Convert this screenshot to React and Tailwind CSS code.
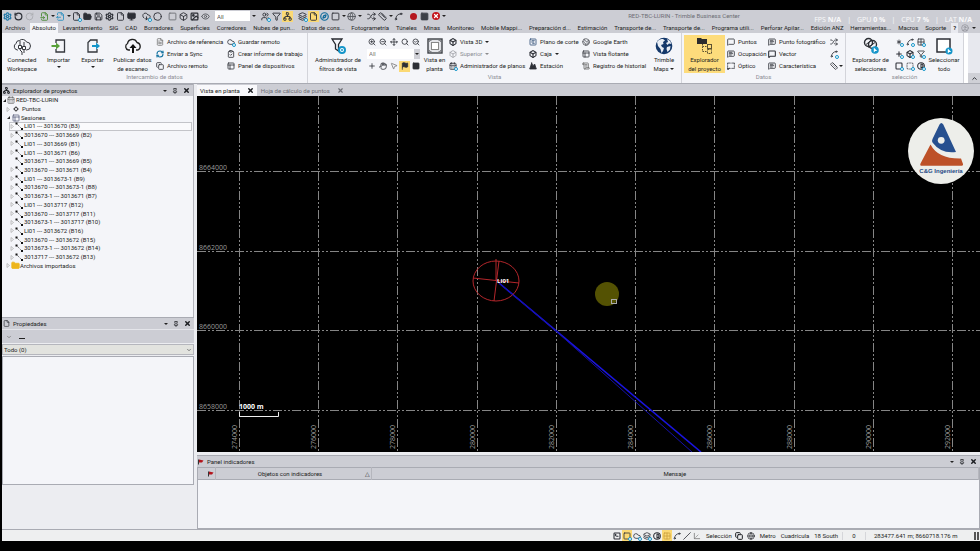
import React, { useState } from "react";
import clsx from "clsx";
import {
  RotateCcw,
  RotateCw,
  FileInput,
  FileOutput,
  FileText,
  File,
  FolderOpen,
  Folder,
  Save,
  Settings,
  Monitor,
  CloudDownload,
  Circle,
  Square,
  Box,
  Image,
  Eye,
  Users,
  Filter,
  Network,
  Layers,
  Compass,
  Globe,
  Shuffle,
  Ruler,
  Spline,
  Cloud,
  RefreshCw,
  Copy,
  ClipboardCheck,
  PanelsTopLeft,
  ZoomIn,
  ZoomOut,
  Search,
  SearchCheck,
  Move,
  Hand,
  MousePointer2,
  Flag,
  CalendarDays,
  SquareChartGantt,
  Mountain,
  Earth,
  ScrollText,
  MessageSquare,
  MessageSquareText,
  MessageSquareDashed,
  Plus,
  Asterisk,
  Grid2x2,
  BoxSelect,
  Contrast,
  CircleUser,
  Pin,
  X,
  ChevronUp,
  ChevronDown,
  SquareTerminal,
  Slash,
  Axis3d,
} from "lucide-react";

const TABS = [
  "Archivo",
  "Absoluto",
  "Levantamiento",
  "SIG",
  "CAD",
  "Borradores",
  "Superficies",
  "Corredores",
  "Nubes de pun...",
  "Datos de cons...",
  "Fotogrametría",
  "Túneles",
  "Minas",
  "Monitoreo",
  "Mobile Mappi...",
  "Preparación d...",
  "Estimación",
  "Transporte de...",
  "Transporte de...",
  "Programa utili...",
  "Perforar Apilar...",
  "Edición ANZ",
  "Herramientas...",
  "Macros",
  "Soporte",
];

const SESSIONS = [
  "LI01 --- 3013670 (B3)",
  "3013670 --- 3013669 (B2)",
  "LI01 --- 3013669 (B1)",
  "LI01 --- 3013671 (B6)",
  "3013671 --- 3013669 (B5)",
  "3013670 --- 3013671 (B4)",
  "LI01 --- 3013673-1 (B9)",
  "3013670 --- 3013673-1 (B8)",
  "3013673-1 --- 3013671 (B7)",
  "LI01 --- 3013717 (B12)",
  "3013670 --- 3013717 (B11)",
  "3013673-1 --- 3013717 (B10)",
  "LI01 --- 3013672 (B16)",
  "3013670 --- 3013672 (B15)",
  "3013673-1 --- 3013672 (B14)",
  "3013717 --- 3013672 (B13)",
];

// "caret" entries are the little split-button arrows
const QUICK_LEFT = [
  [
    { icon: Settings, label: "Trimble", color: "text-[#1d77a8]", bold: true },
    { icon: RotateCcw, label: "Deshacer", bold: true },
    { icon: RotateCw, label: "Rehacer", color: "text-[#a9abb0]" },
  ],
  [
    { icon: FileInput, label: "Importar", color: "text-[#4c8a35]" },
    "caret",
    { icon: FileOutput, label: "Exportar", color: "text-[#2a8fc0]" },
    "caret",
    { icon: File, label: "Nuevo", badge: true },
    { icon: FolderOpen, label: "Abrir", solid: true },
    { icon: Save, label: "Guardar" },
    { icon: Settings, label: "Configuración", bold: true },
    { icon: File, label: "Plantilla" },
    { icon: Monitor, label: "Dispositivo", solid: true },
  ],
  [
    { icon: CloudDownload, label: "Descargar", badge: true },
    { icon: Circle, label: "Sincronizar" },
  ],
  [
    { icon: Square, label: "Planta", color: "text-[#6d7076]" },
    { icon: Box, label: "Vista 3D" },
    { icon: Image, label: "Perfil", bold: true },
    { icon: Eye, label: "Órbita", color: "text-[#55585e]" },
  ],
];

const QUICK_RIGHT = [
  [
    { icon: Users, label: "Selecciones", badge: true },
    { icon: Filter, label: "Filtro" },
    { icon: Network, label: "Explorador", active: true },
  ],
  [
    { icon: Layers, label: "Capas", badge: true },
    { icon: File, label: "Propiedades", active: true },
    { icon: Compass, label: "Brújula", color: "text-[#0f6b9c]", bold: true },
    { icon: Square, label: "Hoja" },
    "caret",
    { icon: Globe, label: "Coordenadas", color: "text-[#55585e]" },
    "caret",
  ],
  [
    { icon: Shuffle, label: "Ajustar" },
    { icon: Ruler, label: "Medir" },
    "caret",
    { icon: Spline, label: "Línea" },
  ],
  [
    { icon: Circle, label: "Grabar", color: "text-[#c4151c]", dot: true },
    { icon: Square, label: "Detener", color: "text-[#3c4047]", solid: true },
    { icon: X, label: "Cancelar", round: true },
    "caret",
  ],
];

const Caret = ({ className }) => (
  <span
    className={clsx(
      "block h-0 w-0 border-x-2 border-t-2 border-x-transparent border-t-[#222]",
      className
    )}
  />
);

const Glyph = ({ item, className }) => {
  const Icon = item.icon;
  return (
    <span className={clsx("relative block shrink-0", className || "size-2")}>
      <Icon
        className={clsx("size-full", item.color || "text-[#2c2f36]")}
        strokeWidth={item.bold ? 3.2 : 2.4}
        fill={item.solid ? "currentColor" : "none"}
      />
      {item.badge && (
        <span className="absolute -right-px -bottom-px size-1 rounded-full border border-[#1595c9] bg-white" />
      )}
    </span>
  );
};

const QuickGroup = ({ items }) => (
  <div className="flex items-center">
    {items.map((item, i) =>
      item === "caret" ? (
        <span key={i} className="flex w-[5px] justify-center">
          <Caret />
        </span>
      ) : (
        <button
          key={i}
          aria-label={item.label}
          className={clsx(
            "flex h-[11px] w-[11px] items-center justify-center",
            item.active && "bg-[#fbd974]"
          )}
        >
          {item.round && (
            <span className="flex size-2 items-center justify-center rounded-full bg-[#c4151c] text-white">
              <X className="size-[6px]" strokeWidth={5} />
            </span>
          )}
          {item.dot && <span className="size-[7px] rounded-full bg-[#b5161d]" />}
          {!item.round && !item.dot && <Glyph item={item} className="size-[9px]" />}
        </button>
      )
    )}
  </div>
);

const TitleBar = () => (
  <div className="flex h-3 items-center">
    <div className="flex h-full items-center gap-1">
      {QUICK_LEFT.map((g, i) => (
        <QuickGroup key={i} items={g} />
      ))}
      <div className="flex items-center">
        <input
          aria-label="Filtro rápido"
          defaultValue="All"
          className="h-[10px] w-[35px] bg-white px-[2px] text-[6px] text-[#555]"
        />
        <Caret className="ml-[2px]" />
      </div>
      {QUICK_RIGHT.map((g, i) => (
        <QuickGroup key={i} items={g} />
      ))}
    </div>
    <h1 className="flex-1 pr-[58px] text-center text-[#6c6e75]">
      RED-TBC-LURIN - Trimble Business Center
    </h1>
  </div>
);

const Stat = ({ name, value }) => (
  <span>
    {name} <b>{value}</b>
  </span>
);

// Performance counter that floats over the title bar
const PerfOverlay = () => (
  <div className="absolute top-[16px] right-2 flex gap-[6px] font-['Open_Sans',sans-serif] text-[7px] leading-[7px] text-white/90">
    <Stat name="FPS" value="N/A" />
    <span>|</span>
    <Stat name="GPU" value="0 %" />
    <span>|</span>
    <Stat name="CPU" value="7 %" />
    <span>|</span>
    <Stat name="LAT" value="N/A" />
  </div>
);

const RibbonTabs = ({ active, onSelect }) => (
  <nav className="flex h-[11px] items-end justify-between pr-1 pl-px">
    {TABS.map((tab, i) => (
      <button
        key={i}
        onClick={() => onSelect(i)}
        className={clsx(
          "h-[10px] px-[2px] whitespace-nowrap",
          i === active ? "bg-[#f4f5f9]" : "hover:bg-white/50"
        )}
      >
        {tab}
      </button>
    ))}
    <button aria-label="Ayuda" className="h-[10px] bg-[#e9eaf0] px-[2px] font-bold">
      ?
    </button>
    <button aria-label="Usuario" className="h-[10px] text-[#8b8d94]">
      <CircleUser className="size-2" />
    </button>
    <Caret className="mb-1" />
  </nav>
);

/* ---- large ribbon drawings ---- */

const ConnectedIcon = () => (
  <svg viewBox="0 0 18 18" className="size-[18px]" fill="none" stroke="#34373d">
    <path d="M5 13H4.500A3.500 3.500 0 0 1 3 6.500 A3.500 3.500 0 0 1 6.500 3.500 A4.500 4.500 0 0 1 13.500 5 A4 4 0 0 1 13.500 13 H13" />
    <path d="M7 8v5l2 2v3M11 5v5M11 13v3M7 4v4" />
    <path d="M5.500 8.500h3v3h-3zM9.500 9.500h3v3h-3z" fill="#fff" />
  </svg>
);

const ImportIcon = () => (
  <svg viewBox="0 0 18 18" className="size-[18px]" fill="none">
    <path d="M6 6V3H14.500V15H6V12" stroke="#34373d" strokeWidth="1.300" />
    <path d="M1.500 9H7" stroke="#58a13a" strokeWidth="2" />
    <path d="M6 5.500L10 9L6 12.500Z" fill="#58a13a" />
  </svg>
);

const ExportIcon = () => (
  <svg viewBox="0 0 18 18" className="size-[18px]" fill="none">
    <path d="M13 12V15H4V5.500L6.500 3H13V6" stroke="#34373d" strokeWidth="1.300" />
    <path d="M8 9H13" stroke="#1595c9" strokeWidth="2" />
    <path d="M12 5.500L16 9L12 12.500Z" fill="#1595c9" />
  </svg>
);

const PublishIcon = () => (
  <svg viewBox="0 0 18 18" className="size-[18px]" fill="none">
    <path
      d="M6 13H4.500A3.500 3.500 0 0 1 3.500 6.500 A5 5 0 0 1 13 5.500 A4 4 0 0 1 14 13H12"
      stroke="#222"
      strokeWidth="1.300"
    />
    <path d="M9 7L12.500 11H10V16H8V11H5.500Z" fill="#111" />
  </svg>
);

const FilterIcon = () => (
  <svg viewBox="0 0 18 18" className="size-[18px]" fill="none">
    <path d="M3 2H13L9.500 7.500V14L6.500 12V7.500Z" stroke="#26292f" strokeWidth="1.300" />
    <circle cx="13" cy="13" r="3" stroke="#1595c9" strokeWidth="2" fill="#fff" />
    <circle cx="13" cy="13" r="1" fill="#1595c9" />
  </svg>
);

const PlanIcon = () => (
  <svg viewBox="0 0 18 18" className="size-[18px]" fill="none" stroke="#5a5d63">
    <rect x="2" y="2" width="14" height="14" fill="#e3e4e8" stroke="#3d4046" strokeWidth="1.400" />
    <rect x="5.500" y="5.500" width="7" height="7" fill="#fff" stroke="#888" />
    <path d="M3.500 5V3.500H5.500M12.500 3.500H14.500V5M3.500 13V14.500H5.500M12.500 14.500H14.500V13" strokeWidth="0.700" />
  </svg>
);

const GlobeIcon = () => (
  <svg viewBox="0 0 18 18" className="size-[18px]">
    <circle cx="9" cy="9" r="8.300" fill="#15396b" />
    <path
      d="M2 5C4 2 6 2 8 2L10 3.500L8 5L8.500 7L6 8L7 10L9 11L8 14L6.500 16L5.500 12L3 9ZM12 2L15 4L16.500 7L14 6.500L12.500 8L11 6L13 5ZM12 10L15.500 9L15 12.500L12.500 15L11.500 12Z"
      fill="#e9eef5"
    />
  </svg>
);

const ExplorerIcon = () => (
  <svg viewBox="0 0 18 18" className="size-[18px]" fill="none" stroke="#5c5233">
    <path d="M1 1H5L6 2H11V7H1Z" fill="#2b2b2d" stroke="none" />
    <path d="M6.500 7V14.500H10.500M6.500 9.500H10.500" strokeDasharray="1.500 1" />
    <rect x="11.500" y="7.500" width="4" height="4" />
    <rect x="11.500" y="12.500" width="4" height="4" strokeDasharray="2 1" />
  </svg>
);

const SelectionsIcon = () => (
  <svg viewBox="0 0 18 18" className="size-[18px]" fill="none" stroke="#2b2e34">
    <circle cx="6.500" cy="5.500" r="4" strokeWidth="1.400" />
    <circle cx="10.500" cy="7.500" r="4" strokeWidth="1.400" />
    <path d="M4 7.500L9 3.500M6.500 10.500L13 5.500" />
    <circle cx="13" cy="13" r="3.800" fill="#1595c9" stroke="none" />
    <path d="M11.800 10.500V15.500L13.200 14H15.200Z" fill="#fff" stroke="none" />
  </svg>
);

const SelectAllIcon = () => (
  <svg viewBox="0 0 18 18" className="size-[18px]" fill="none">
    <rect x="2" y="2" width="13" height="13" fill="#fff" stroke="#2b2e34" strokeWidth="1.500" />
    <circle cx="14" cy="14" r="3.500" fill="#1595c9" />
    <path d="M12.800 11.500V16.500L14.200 15H16.200Z" fill="#fff" />
  </svg>
);

const BigButton = ({ icon, lines, caret, active, className }) => (
  <button
    className={clsx(
      "flex h-[38px] shrink-0 flex-col items-center pt-[2px] whitespace-nowrap",
      active && "bg-[#fddc7c]",
      className
    )}
  >
    {icon}
    {lines.map((line, i) => (
      <span key={line} className="mt-px flex items-center gap-[2px]">
        {line}
        {caret && i > 0 && <Caret />}
      </span>
    ))}
    {caret && lines.length === 1 && <Caret className="mt-[2px]" />}
  </button>
);

const SmallColumn = ({ items, className }) => (
  <div className={clsx("flex shrink-0 flex-col pt-px", className)}>
    {items.map((item) => (
      <button
        key={item.label}
        disabled={item.disabled}
        className={clsx(
          "flex h-3 items-center gap-[3px] whitespace-nowrap",
          item.disabled && "text-[#8b8d94]"
        )}
      >
        <Glyph item={item} />
        {item.label}
        {item.caret && <Caret className={item.disabled && "opacity-50"} />}
      </button>
    ))}
  </div>
);

const IconRow = ({ items }) => (
  <div className="flex h-3 items-center">
    {items.map((item) => (
      <button
        key={item.label}
        aria-label={item.label}
        className={clsx(
          "flex size-[11px] items-center justify-center",
          item.active && "bg-[#fbd974]"
        )}
      >
        <Glyph item={item} />
      </button>
    ))}
  </div>
);

const RibbonGroup = ({ title, className, children }) => (
  <section
    className={clsx(
      "flex flex-col border-r border-[#d3d4da] pt-[2px]",
      className
    )}
  >
    <div className="flex h-[38px]">{children}</div>
    <p className="text-center text-[#8b8d94]">{title}</p>
  </section>
);

const Ribbon = () => (
  <div className="flex h-[51px] border-b border-[#a9abb3] bg-[#f4f5f9]">
    <RibbonGroup title="Intercambio de datos" className="w-[306px]">
      <BigButton icon={<ConnectedIcon />} lines={["Connected", "Workspace"]} className="w-[40px]" />
      <BigButton icon={<ImportIcon />} lines={["Importar"]} caret className="w-[33px]" />
      <BigButton icon={<ExportIcon />} lines={["Exportar"]} caret className="w-[35px]" />
      <BigButton icon={<PublishIcon />} lines={["Publicar datos", "de escaneo"]} className="w-[45px]" />
      <SmallColumn
        className="w-[72px] pl-px"
        items={[
          { icon: FileText, label: "Archivo de referencia", color: "text-[#777]" },
          { icon: RefreshCw, label: "Enviar a Sync", color: "text-[#1272a0]", bold: true },
          { icon: Copy, label: "Archivo remoto" },
        ]}
      />
      <SmallColumn
        items={[
          { icon: Cloud, label: "Guardar remoto", badge: true },
          { icon: ClipboardCheck, label: "Crear informe de trabajo" },
          { icon: PanelsTopLeft, label: "Panel de dispositivos" },
        ]}
      />
    </RibbonGroup>

    <RibbonGroup title="Vista" className="w-[374px]">
      <BigButton
        icon={<FilterIcon />}
        lines={["Administrador de", "filtros de vista"]}
        className="ml-px w-[58px]"
      />
      <div className="w-[54px] shrink-0 pt-px">
        <IconRow
          items={[
            { icon: ZoomIn, label: "Acercar" },
            { icon: ZoomOut, label: "Alejar" },
            { icon: Move, label: "Desplazar" },
            { icon: Search, label: "Ventana" },
            { icon: SearchCheck, label: "Extensión" },
          ]}
        />
        <div className="flex h-3 items-center">
          <select
            aria-label="Filtro de vista"
            className="h-[10px] w-[47px] appearance-none bg-white px-[2px] text-[#777]"
          >
            <option>All</option>
          </select>
          <span className="flex h-[10px] w-[6px] items-center justify-center bg-[#cfd0d6]">
            <Caret />
          </span>
        </div>
        <IconRow
          items={[
            { icon: Plus, label: "Centrar" },
            { icon: Hand, label: "Mano" },
            { icon: MousePointer2, label: "Orbitar", color: "text-[#777]" },
            { icon: Flag, label: "Indicadores", active: true, solid: true },
            { icon: Square, label: "Fondo", solid: true },
          ]}
        />
      </div>
      <BigButton icon={<PlanIcon />} lines={["Vista en", "planta"]} className="w-[27px]" />
      <SmallColumn
        className="w-[81px] pl-px"
        items={[
          { icon: Box, label: "Vista 3D", caret: true, bold: true },
          { icon: Box, label: "Superior", caret: true, disabled: true, color: "text-[#9a9ca2]" },
          { icon: CalendarDays, label: "Administrador de planos", badge: true },
        ]}
      />
      <SmallColumn
        className="w-[53px]"
        items={[
          { icon: SquareChartGantt, label: "Plano de corte", color: "text-[#2b4a73]" },
          { icon: Box, label: "Caja", caret: true, bold: true },
          { icon: Mountain, label: "Estación", solid: true },
        ]}
      />
      <SmallColumn
        className="w-[68px]"
        items={[
          { icon: Earth, label: "Google Earth", color: "text-[#55585e]" },
          { icon: PanelsTopLeft, label: "Vista flotante" },
          { icon: ScrollText, label: "Registro de historial", color: "text-[#666]" },
        ]}
      />
      <BigButton icon={<GlobeIcon />} lines={["Trimble", "Maps"]} caret className="w-[28px]" />
    </RibbonGroup>

    <RibbonGroup title="Datos" className="w-[164px]">
      <BigButton
        icon={<ExplorerIcon />}
        lines={["Explorador", "del proyecto"]}
        active
        className="ml-[2px] w-[41px]"
      />
      <SmallColumn
        className="w-[43px] pl-[2px]"
        items={[
          { icon: MessageSquare, label: "Puntos" },
          { icon: MessageSquareText, label: "Ocupación" },
          { icon: MessageSquareDashed, label: "Óptico", bold: true },
        ]}
      />
      <SmallColumn
        className="w-[60px]"
        items={[
          { icon: MessageSquareText, label: "Punto fotográfico" },
          { icon: MessageSquare, label: "Vector", bold: true },
          { icon: MessageSquareText, label: "Característica" },
        ]}
      />
      <div className="pt-px">
        <IconRow items={[{ icon: Shuffle, label: "Trayectoria" }]} />
        <IconRow items={[{ icon: Spline, label: "Curva", badge: true }]} />
        <div className="flex items-center">
          <IconRow items={[{ icon: Ruler, label: "Medición" }]} />
          <Caret />
        </div>
      </div>
    </RibbonGroup>

    <RibbonGroup title="selección" className="w-[118px] shrink-0">
      <BigButton
        icon={<SelectionsIcon />}
        lines={["Explorador de", "selecciones"]}
        className="ml-[2px] w-[45px]"
      />
      <div className="shrink-0 pt-px">
        <IconRow
          items={[
            { icon: Asterisk, label: "Puntos", badge: true },
            { icon: Spline, label: "Líneas", badge: true },
            { icon: Grid2x2, label: "Mallas", badge: true },
          ]}
        />
        <IconRow
          items={[
            { icon: Plus, label: "Agregar", badge: true, bold: true },
            { icon: Box, label: "Volumen", badge: true, bold: true },
            { icon: Filter, label: "Filtrar", badge: true },
          ]}
        />
        <IconRow
          items={[
            { icon: Square, label: "Área", badge: true, bold: true },
            { icon: BoxSelect, label: "Ventana", badge: true },
            { icon: Contrast, label: "Invertir", badge: true, bold: true },
          ]}
        />
      </div>
      <BigButton icon={<SelectAllIcon />} lines={["Seleccionar", "todo"]} className="w-[36px]" />
    </RibbonGroup>

    <div className="flex flex-1 items-end justify-end border-l-4 border-white bg-[#e7e8ee]">
      <button
        aria-label="Contraer la cinta"
        className="flex h-[10px] w-3 items-center justify-center bg-[#cfd0d6]"
      >
        <ChevronUp className="size-[7px]" strokeWidth={3} />
      </button>
    </div>
  </div>
);

const PanelHeader = ({ icon, title }) => (
  <header className="flex h-3 shrink-0 items-center gap-[3px] border-t border-[#a9abb3] bg-[#cccdd4] pr-[3px] pl-px">
    {icon}
    <h2 className="flex-1">{title}</h2>
    <div className="flex items-center gap-[5px]">
      <button aria-label="Opciones">
        <Caret />
      </button>
      <button aria-label="Fijar">
        <Pin className="size-[6px]" strokeWidth={3} />
      </button>
      <button aria-label="Cerrar">
        <X className="size-[7px]" strokeWidth={5} />
      </button>
    </div>
  </header>
);

const Expander = ({ open }) => (
  <svg viewBox="0 0 5 5" className="size-[5px] shrink-0">
    {open ? (
      <path d="M4 1V4H1Z" fill="#222" />
    ) : (
      <path d="M1 0.500L3.500 2.500L1 4.500Z" fill="none" stroke="#aaa" strokeWidth="0.700" />
    )}
  </svg>
);

const VectorIcon = () => (
  <svg viewBox="0 0 8 8" className="size-2 shrink-0">
    <path d="M1.500 1.500L6.500 6.500" stroke="#555" strokeWidth="0.800" strokeDasharray="1.500 0.800" />
    <path d="M0.500 0.500h2v2h-2zM6 6h2v2h-2z" fill="#111" />
  </svg>
);

const ProjectTree = () => {
  const [selected, setSelected] = useState(0);
  return (
    <ul className="flex h-[174px] flex-col [&>li]:flex [&>li]:min-h-0 [&>li]:flex-1 [&>li]:items-center">
      <li>
        <Expander open />
        <CalendarDays className="mr-px size-2 text-[#555]" />
        RED-TBC-LURIN
      </li>
      <li className="gap-[2px] pl-[4px]">
        <Expander />
        <span className="mx-px size-1 rotate-45 border border-[#333]" />
        <span className="pl-px">Puntos</span>
      </li>
      <li className="gap-px pl-[4px]">
        <Expander open />
        <PanelsTopLeft className="size-2 text-[#444a6a]" />
        Sesiones
      </li>
      {SESSIONS.map((s, i) => (
        <li key={s} className="pr-px pl-[7px]">
          <button
            onClick={() => setSelected(i)}
            className={clsx(
              "flex h-full w-full items-center border",
              selected === i ? "border-[#c3c4c9] bg-[#fafafc]" : "border-transparent"
            )}
          >
            {i === 4 ? <span className="w-[5px]" /> : <Expander />}
            <VectorIcon />
            <span className="pl-px">{s}</span>
          </button>
        </li>
      ))}
      <li className="pl-[4px]">
        <Expander />
        <Folder className="size-[9px] text-[#edb51c]" fill="currentColor" />
        Archivos importados
      </li>
    </ul>
  );
};

const SidePanels = () => (
  <aside className="flex w-[192px] shrink-0 flex-col pb-11">
    <section className="min-h-0 flex-1 border-r border-[#b5b6bd] bg-[#f4f5f9]">
      <PanelHeader
        title="Explorador de proyectos"
        icon={<Network className="size-[7px]" strokeWidth={3} />}
      />
      <ProjectTree />
    </section>
    <section className="flex h-[168px] flex-col">
      <PanelHeader title="Propiedades" icon={<File className="size-[7px]" />} />
      <div className="flex h-[14px] items-center gap-[7px] border-t border-[#e4e5ea] bg-[#cccdd4] pl-1">
        <button aria-label="Ordenar" className="text-[#777]">
          <ChevronDown className="size-[6px]" strokeWidth={3} />
        </button>
        <button aria-label="Contraer" className="mt-[3px] h-px w-[6px] bg-[#222]" />
      </div>
      <div className="relative mt-px h-[11px] border border-[#b5b6bd] bg-[#e2e3df]">
        <select
          aria-label="Objetos seleccionados"
          className="block h-full w-full appearance-none px-px"
        >
          <option>Todo (0)</option>
        </select>
        <ChevronDown className="pointer-events-none absolute top-[2px] right-px size-[6px]" />
      </div>
      <div className="mt-px flex-1 border border-[#a9abb3] bg-[#f4f5f9]" />
    </section>
  </aside>
);

// Grid origin and step inside the drawing, one step is 2000 m
const EASTINGS = Array.from({ length: 10 }, (_, i) => ({
  x: Math.round(41.6 + i * 79.3),
  label: 274000 + i * 2000,
}));
const NORTHINGS = Array.from({ length: 4 }, (_, i) => ({
  y: Math.round(75 + i * 79.5),
  label: 8664000 - i * 2000,
}));

const PlanView = () => (
  <svg
    viewBox="0 0 783 356"
    preserveAspectRatio="xMinYMin slice"
    className="block h-full w-full"
    fontFamily="Open Sans"
    fontSize="7"
  >
    <g stroke="#858585" strokeDasharray="9 2 2 2 2 2">
      {EASTINGS.map(({ x }) => (
        <path key={x} d={`M${x + 0.5} 0V356`} />
      ))}
      {NORTHINGS.map(({ y }) => (
        <path key={y} d={`M0 ${y + 0.5}H783`} />
      ))}
    </g>
    <g fill="#9a9a9a">
      {NORTHINGS.map(({ y, label }) => (
        <text key={label} x="2" y={y - 1}>
          {label}
        </text>
      ))}
      {EASTINGS.map(({ x, label }) => (
        <text key={label} transform={`translate(${x - 2} 353) rotate(-90)`}>
          {label}
        </text>
      ))}
    </g>

    <path d="M42.500 316V320.500H81.500V316" fill="none" stroke="#eee" />
    <text x="42" y="313" fill="#fff" fontWeight="bold">
      1000 m
    </text>

    <g stroke="#1a14e0" fill="none">
      <path d="M302 187L504 356" strokeWidth="1.600" />
      <path d="M302 187L360 236L495 356" stroke="#1510a8" />
    </g>
    <g stroke="#b3262b" fill="none">
      <ellipse cx="299" cy="185" rx="23" ry="20" />
      <path d="M299 163V185M302 165L297 205M276 182L322 187" />
    </g>
    <text x="300" y="187" fill="#fff" fontWeight="bold" fontSize="6">
      LI01
    </text>

    <circle cx="410" cy="198" r="12" fill="#545203" />
    <rect x="414.500" y="203.500" width="5" height="4" fill="none" stroke="#aaa" />
  </svg>
);

const Logo = () => (
  <svg
    viewBox="0 0 66 66"
    className="absolute top-[22px] right-[6px] size-[66px]"
    fontFamily="Liberation Sans"
  >
    <circle cx="33" cy="33" r="33" fill="#edeeea" />
    <path
      d="M31.500 6.500Q33.300 3.500 35.300 6.500L48 34Q33 36 24.500 24.500Q23.500 23 24.500 21Z"
      fill="#27508f"
    />
    <path
      d="M22.500 26.500Q30 41 53 40.500L55 46Q55.500 47.800 53 47.800H14Q11.500 47.800 12.500 45.500Z"
      fill="#bd5128"
    />
    <circle cx="33.200" cy="22.300" r="3.400" fill="#edeeea" />
    <text x="33" y="54.500" fontSize="6" fontWeight="bold" fill="#1f4a86" textAnchor="middle">
      C&amp;G Ingeniería
    </text>
  </svg>
);

const RedFlag = () => (
  <svg viewBox="0 0 6 6" className="size-[6px] shrink-0">
    <path d="M0.500 0.500V5.500" stroke="#333" />
    <path d="M1 0.500L5.500 1.500L4 3.500H1Z" fill="#b3141c" />
  </svg>
);

const IndicatorPanel = () => (
  <section className="flex h-[74px] shrink-0 flex-col">
    <PanelHeader title="Panel indicadores" icon={<RedFlag />} />
    <div className="flex-1 border-x border-b border-[#a9abb3] bg-[#f4f5f9]">
      <table className="w-full table-fixed border-collapse">
        <thead>
          <tr className="h-3 border-y border-[#a9abb3] bg-[#cccdd4] [&>th]:border-r [&>th]:border-[#b5b6bd] [&>th]:font-normal">
            <th className="w-[17px]">
              <span className="flex justify-end pr-px">
                <RedFlag />
              </span>
            </th>
            <th className="w-[156px]">
              <span className="flex items-center pr-px">
                <span className="flex-1">Objetos con indicadores</span>△
              </span>
            </th>
            <th>Mensaje</th>
          </tr>
        </thead>
        <tbody />
      </table>
    </div>
  </section>
);

const DocumentTabs = () => (
  <div className="flex h-3 items-end bg-[#cccdd4]">
    <div className="flex h-[11px] items-center gap-[7px] bg-[#f8f8fb] px-[3px]">
      <button>Vista en planta</button>
      <button aria-label="Cerrar vista en planta">
        <X className="size-[7px]" strokeWidth={5} />
      </button>
    </div>
    <div className="flex h-[11px] items-center gap-[7px] px-1 text-[#6c6e75]">
      <button>Hoja de cálculo de puntos</button>
      <button aria-label="Cerrar hoja de cálculo">
        <X className="size-[7px]" strokeWidth={4} />
      </button>
    </div>
  </div>
);

const STATUS_ICONS = [
  { icon: SquareTerminal, label: "Línea de comandos", bold: true },
  { icon: Square, label: "Modo rectángulo", badge: true, active: true },
  { icon: Cloud, label: "Modo polígono", badge: true },
  { icon: Layers, label: "Modo capas", badge: true },
  { icon: Contrast, label: "Invertir fondo", bold: true },
  { icon: Grid2x2, label: "Cuadrícula", active: true, color: "text-[#c9a03c]" },
  { icon: Spline, label: "Referencia a objetos" },
  { icon: Slash, label: "Referencia paralela" },
  { icon: Axis3d, label: "Ortogonal", color: "text-[#777]" },
];

const StatusBar = () => (
  <footer className="flex h-3 shrink-0 items-center justify-end border-t border-[#a9abb3] bg-[#eeeff0] pr-px">
    {STATUS_ICONS.map((item) => (
      <button
        key={item.label}
        aria-label={item.label}
        className={clsx(
          "flex h-[11px] w-[10px] items-center justify-center",
          item.active && "bg-[#fbd974]"
        )}
      >
        <Glyph item={item} />
      </button>
    ))}
    <button className="ml-[4px]">Selección</button>
    <Copy className="mx-[3px] size-2" strokeWidth={3} />
    <Globe className="mr-[5px] ml-px size-2" />
    <div className="flex items-center gap-[5px]">
      <span>Metro</span>
      <span>Cuadrícula</span>
      <span>18 South</span>
    </div>
    <span className="ml-[4px] w-[24px] border-x border-[#d5d6da] text-center">0</span>
    <span className="w-[108px] pl-[8px]">283477.641 m; 8660718.176 m</span>
    <span className="h-2 w-[2px] bg-[#555]" />
    <span className="ml-px h-2 w-[2px] bg-[#555]" />
  </footer>
);

export default function App() {
  const [tab, setTab] = useState(1);
  return (
    <div className="relative flex h-screen flex-col bg-black py-[10px] pl-[2px] font-[Roboto,sans-serif] text-[6px] leading-2 text-[#1c1e22]">
      <div className="bg-[#cccdd4]">
        <TitleBar />
        <RibbonTabs active={tab} onSelect={setTab} />
        <Ribbon />
      </div>
      <PerfOverlay />
      <main className="flex min-h-0 flex-1 gap-[3px] bg-[#ecedf1]">
        <SidePanels />
        <div className="flex min-w-0 flex-1 flex-col">
          <DocumentTabs />
          <div className="relative mb-[3px] min-h-0 flex-1 overflow-hidden bg-black">
            <PlanView />
            <Logo />
          </div>
          <IndicatorPanel />
        </div>
      </main>
      <StatusBar />
    </div>
  );
}
